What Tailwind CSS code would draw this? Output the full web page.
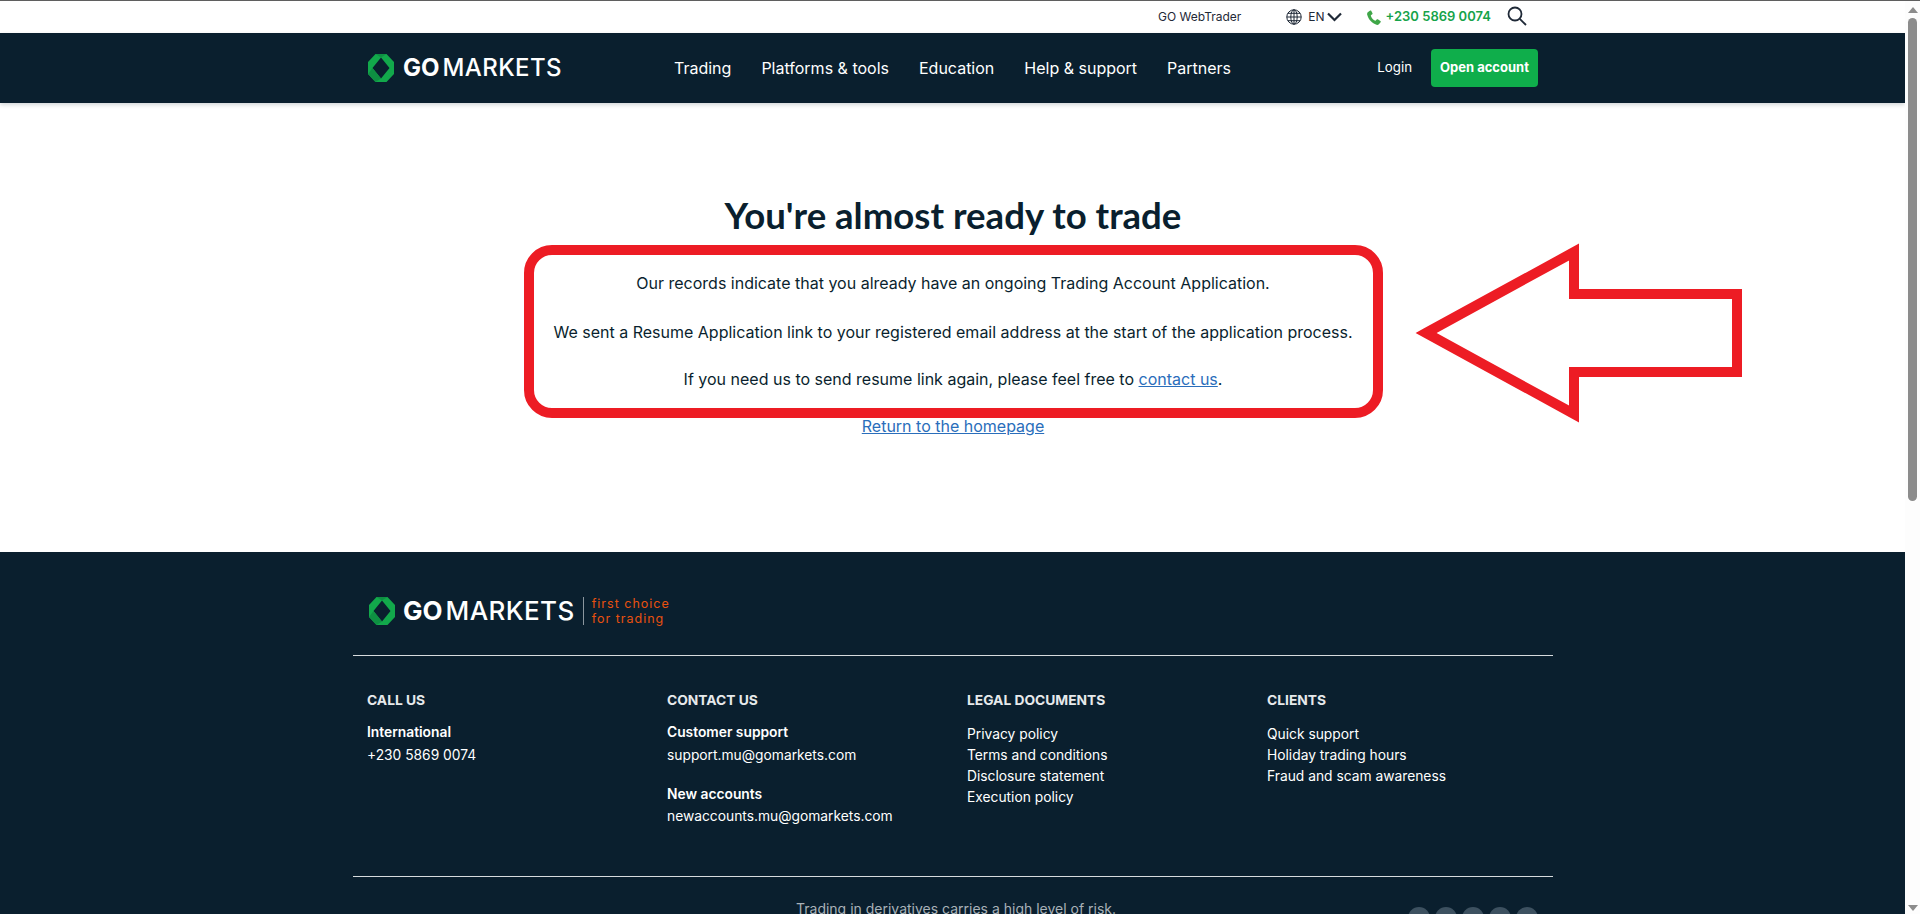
<!DOCTYPE html>
<html lang="en">

<head>
  <meta charset="UTF-8" />
  <meta name="viewport" content="width=device-width, initial-scale=1" />
  <title>GO Markets</title>
  <script src="https://cdn.jsdelivr.net/npm/@tailwindcss/browser@4"></script>
</head>

<body class="h-screen overflow-hidden bg-white font-['Inter',sans-serif] text-[#0a1f2e]">

  <!-- Window edge -->
  <div class="h-px bg-[#5f5f5f]"></div>

  <div class="relative flex h-[913px]">
    <div class="relative w-[1905px] overflow-hidden">

      <!-- Top bar -->
      <div class="h-[32px] bg-white">
        <div class="ml-[353px] flex h-full w-[1200px] items-center">
          <a class="ml-[805px] text-[12px] text-[#1f2937]">GO WebTrader</a>
          <svg class="ml-[45px] h-[16px] w-[16px]" viewBox="0 0 16 16" fill="none" stroke="#1f2937" stroke-width="1">
            <circle cx="8" cy="8" r="7.2" />
            <ellipse cx="8" cy="8" rx="3.2" ry="7.2" />
            <path d="M8 .8v14.4M.8 8h14.4M1.8 4.3h12.4M1.8 11.7h12.4" />
          </svg>
          <span class="ml-[6px] text-[12px] text-[#1f2937]">EN</span>
          <svg class="ml-[2px] h-[10px] w-[15px]" viewBox="0 0 15 10" fill="none" stroke="#1f2937" stroke-width="2.2">
            <path d="M1 1.5l6.5 6.5 6.5-6.5" />
          </svg>
          <svg class="ml-[25px] h-[15px] w-[14px]" viewBox="0 0 14 15" fill="#3fa648">
            <path d="M3.2.6 1.1 1.9C.2 2.5-.1 3.6.2 4.7c.7 2.5 1.9 4.6 3.5 6.4 1.7 1.8 3.6 3.1 5.7 3.7 1 .3 2 0 2.7-.8l1.5-1.8c.3-.4.2-.9-.2-1.2l-2.6-1.7c-.4-.2-.8-.2-1.1.1l-1 1c-.3.3-.6.3-1 .1-1.7-.9-3-2.5-3.8-4.5-.1-.4 0-.7.3-.9l1.1-.8c.3-.3.4-.7.2-1.1L4.3.9C4.1.5 3.6.3 3.2.6z" />
          </svg>
          <span class="ml-[5px] text-[13px] font-semibold text-[#16a34a]">+230 5869 0074</span>
          <svg class="ml-[16px] -mt-[3px] h-[20px] w-[20px]" viewBox="0 0 20 20" fill="none" stroke="#1f2937" stroke-width="1.8">
            <circle cx="8" cy="8" r="6.5" />
            <path d="M12.8 12.8l6.2 6.2" />
          </svg>
        </div>
      </div>

      <!-- Main nav -->
      <nav class="relative z-10 h-[70px] bg-[#0a1f2e] shadow-[0_2px_4px_rgba(10,31,46,0.18)]">
        <div class="ml-[353px] flex h-full w-[1200px] items-center pl-[15px] text-white">
          <div class="flex w-[306px] items-center">
            <svg class="h-[28px] w-[26px] shrink-0" viewBox="0 0 26 28">
              <path fill-rule="evenodd" fill="#12a84b" d="M7.5 0h11L26 8v12l-7.5 8h-11L0 20V8zM13 3.5 4.5 14 13 24.5 21.5 14z" />
              <path fill="#0e8f42" d="M7.5 0h11L13 3.5zM0 20l4.5-6L13 24.5 7.5 28z" />
            </svg>
            <span class="ml-[9px] text-[24px] leading-none font-bold tracking-[0px]">GO</span>
            <span class="ml-[3px] text-[24px] leading-none font-medium tracking-[0.4px]">MARKETS</span>
          </div>
          <div class="flex gap-[30px] text-[16px] font-normal">
            <a>Trading</a>
            <a>Platforms &amp; tools</a>
            <a>Education</a>
            <a>Help &amp; support</a>
            <a>Partners</a>
          </div>
          <a class="ml-auto text-[13.3px] font-normal">Login</a>
          <a class="mr-[15px] ml-[19px] flex h-[38px] w-[107px] items-center justify-center rounded-[4px] bg-[#0fae4b] text-[13px] font-bold">Open account</a>
        </div>
      </nav>

      <!-- Message -->
      <main class="relative h-[449px] bg-white">
        <div class="ml-[353px] flex w-[1200px] flex-col items-center">
          <h1 class="mt-[87px] font-['Lato',sans-serif] text-[36.6px] leading-[50px] font-bold text-[#0a1f2e]">You're almost ready to trade</h1>
          <div class="mt-[5px] ml-[1px] h-[173px] w-[859px] rounded-[28px] border-[10px] border-[#ed1c24] pt-[16px] pr-[1px] text-center text-[16px] leading-[24px]">
            <p>Our records indicate that you already have an ongoing Trading Account Application.</p>
            <p class="mt-[25px]">We sent a Resume Application link to your registered email address at the start of the application process.</p>
            <p class="mt-[23px]">If you need us to send resume link again, please feel free to <a class="text-[#2a6ebb] underline">contact us</a>.</p>
          </div>
          <a class="-mt-[4px] text-[16px] leading-[24px] text-[#2a6ebb] underline">Return to the homepage</a>
        </div>
      </main>

      <!-- Annotation arrow -->
      <svg class="absolute top-[242px] left-[1415px] z-20 h-[182px] w-[330px]" viewBox="0 0 330 182" fill="none" stroke="#ed1c24" stroke-width="10">
        <path d="M11 90 159 9v42h163v78H159v42z" />
      </svg>

      <!-- Footer -->
      <footer class="h-[362px] bg-[#0a1f2e] text-white">
        <div class="ml-[353px] w-[1200px]">
          <div class="flex h-[103px] items-center px-[15px] pt-[14px]">
            <svg class="h-[28px] w-[28px] shrink-0" viewBox="0 0 26 28">
              <path fill-rule="evenodd" fill="#12a84b" d="M7.5 0h11L26 8v12l-7.5 8h-11L0 20V8zM13 3.5 4.500 14 13 24.5 21.5 14z" />
              <path fill="#0e8f42" d="M7.5 0h11L13 3.5zM0 20l4.500-6L13 24.5 7.500 28z" />
            </svg>
            <span class="ml-[7px] text-[26px] leading-none font-bold tracking-[0px]">GO</span>
            <span class="ml-[3px] text-[26px] leading-none font-medium tracking-[0.4px]">MARKETS</span>
            <div class="mx-[8px] h-[28px] w-px bg-[#8b969e]"></div>
            <div class="text-[12.5px] leading-[15px] tracking-[1px] text-[#e8510f]">first choice<br />for trading</div>
          </div>
          <div class="h-px bg-[#d7dbde]"></div>

          <div class="flex h-[220px] pt-[34px] pl-[14px] text-[13.8px] leading-[21px]">
            <div class="w-[300px] shrink-0">
              <h3 class="font-bold text-[#e6e9eb]">CALL US</h3>
              <p class="mt-[11px] font-semibold">International</p>
              <p class="mt-[2px]">+230 5869 0074</p>
            </div>
            <div class="w-[300px] shrink-0">
              <h3 class="font-bold text-[#e6e9eb]">CONTACT US</h3>
              <p class="mt-[11px] font-semibold">Customer support</p>
              <p class="mt-[2px]">support.mu@gomarkets.com</p>
              <p class="mt-[18px] font-semibold">New accounts</p>
              <p class="mt-[1px]">newaccounts.mu@gomarkets.com</p>
            </div>
            <div class="w-[300px] shrink-0">
              <h3 class="font-bold text-[#e6e9eb]">LEGAL DOCUMENTS</h3>
              <p class="mt-[13px]">Privacy policy</p>
              <p>Terms and conditions</p>
              <p>Disclosure statement</p>
              <p>Execution policy</p>
            </div>
            <div class="w-[270px] shrink-0">
              <h3 class="font-bold text-[#e6e9eb]">CLIENTS</h3>
              <p class="mt-[13px]">Quick support</p>
              <p>Holiday trading hours</p>
              <p>Fraud and scam awareness</p>
            </div>
          </div>
          <div class="h-px bg-[#d7dbde]"></div>

          <div class="flex h-[37px] items-end">
            <p class="ml-[443px] translate-y-[5px] text-[14px] leading-[21px] text-[#a9b2b8]">Trading in derivatives carries a high level of risk.</p>
            <div class="ml-auto flex translate-y-[15px] gap-[5px] pr-[15px]">
              <span class="h-[22px] w-[22px] rounded-full bg-[#3d5160]"></span>
              <span class="h-[22px] w-[22px] rounded-full bg-[#3d5160]"></span>
              <span class="h-[22px] w-[22px] rounded-full bg-[#3d5160]"></span>
              <span class="h-[22px] w-[22px] rounded-full bg-[#3d5160]"></span>
              <span class="h-[22px] w-[22px] rounded-full bg-[#3d5160]"></span>
            </div>
          </div>
        </div>
      </footer>
    </div>

    <!-- Scrollbar -->
    <div class="flex w-[15px] flex-col items-center bg-[#fdfdfd]">
      <svg class="mt-[6px] h-[6px] w-[10px]" viewBox="0 0 10 6" fill="#8c8c8c"><path d="M5 0l5 6H0z" /></svg>
      <div class="mt-[5px] h-[483px] w-[9px] rounded-[5px] bg-[#8c8c8c]"></div>
      <svg class="mt-auto mb-[3px] h-[6px] w-[10px]" viewBox="0 0 10 6" fill="#8c8c8c"><path d="M5 6l5-6H0z" /></svg>
    </div>
  </div>

</body>

</html>
